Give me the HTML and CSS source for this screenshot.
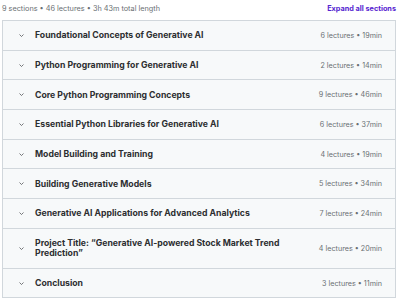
FILE: index.html
```html
<!DOCTYPE html>
<html lang="en">
<head>
    <meta charset="UTF-8">
    <title>Course content</title>
    <link rel="stylesheet" href="styles.css">
</head>
<body>
    <div class="curriculum">
        <div class="summary">
            <span class="totals">9 sections • 46 lectures • 3h 43m total length</span>
            <button class="expand-all">Expand all sections</button>
        </div>
        <div class="sections">
            <div class="section">
                <svg class="chevron" viewBox="0 0 10 6"><path d="M1 1l4 4 4-4"/></svg>
                <span class="title">Foundational Concepts of Generative AI</span>
                <span class="meta">6 lectures • 19min</span>
            </div>
            <div class="section">
                <svg class="chevron" viewBox="0 0 10 6"><path d="M1 1l4 4 4-4"/></svg>
                <span class="title">Python Programming for Generative AI</span>
                <span class="meta">2 lectures • 14min</span>
            </div>
            <div class="section">
                <svg class="chevron" viewBox="0 0 10 6"><path d="M1 1l4 4 4-4"/></svg>
                <span class="title">Core Python Programming Concepts</span>
                <span class="meta">9 lectures • 46min</span>
            </div>
            <div class="section">
                <svg class="chevron" viewBox="0 0 10 6"><path d="M1 1l4 4 4-4"/></svg>
                <span class="title">Essential Python Libraries for Generative AI</span>
                <span class="meta">6 lectures • 37min</span>
            </div>
            <div class="section">
                <svg class="chevron" viewBox="0 0 10 6"><path d="M1 1l4 4 4-4"/></svg>
                <span class="title">Model Building and Training</span>
                <span class="meta">4 lectures • 19min</span>
            </div>
            <div class="section">
                <svg class="chevron" viewBox="0 0 10 6"><path d="M1 1l4 4 4-4"/></svg>
                <span class="title">Building Generative Models</span>
                <span class="meta">5 lectures • 34min</span>
            </div>
            <div class="section">
                <svg class="chevron" viewBox="0 0 10 6"><path d="M1 1l4 4 4-4"/></svg>
                <span class="title">Generative AI Applications for Advanced Analytics</span>
                <span class="meta">7 lectures • 24min</span>
            </div>
            <div class="section">
                <svg class="chevron" viewBox="0 0 10 6"><path d="M1 1l4 4 4-4"/></svg>
                <span class="title">Project Title: “Generative AI-powered Stock Market Trend Prediction”</span>
                <span class="meta">4 lectures • 20min</span>
            </div>
            <div class="section">
                <svg class="chevron" viewBox="0 0 10 6"><path d="M1 1l4 4 4-4"/></svg>
                <span class="title">Conclusion</span>
                <span class="meta">3 lectures • 11min</span>
            </div>
        </div>
    </div>
</body>
</html>
```

FILE: styles.css
```css
body {
    margin: 0;
    background-color: #fff;
    font-family: Inter, "Noto Sans", sans-serif;
    color: #2d2f31;
}
.curriculum {
    padding: 2px 4px 0 2px;
}
.summary {
    display: flex;
    justify-content: space-between;
    align-items: center;
    height: 13px;
    margin-bottom: 5px;
}
.totals {
    font-size: 7.3px;
    color: #6a6f73;
}
.expand-all {
    border: none;
    background: none;
    padding: 0;
    font-family: inherit;
    font-size: 7.3px;
    font-weight: 700;
    color: #5624d0;
    cursor: pointer;
}
.sections {
    border: 1px solid #d1d7dc;
    border-bottom: none;
}
.section {
    display: flex;
    align-items: center;
    padding: 9.2px 13px 9.2px 16px;
    background-color: #f7f9fa;
    border-bottom: 1px solid #d1d7dc;
}
.chevron {
    width: 5px;
    height: 3px;
    flex: none;
    margin-right: 11px;
    fill: none;
    stroke: #3e4143;
    stroke-width: 1.4;
}
.title {
    flex: 1;
    font-size: 8.7px;
    font-weight: 700;
    line-height: 10.3px;
    padding-right: 20px;
}
.meta {
    flex: none;
    font-size: 7.2px;
    color: #6a6f73;
}
```
